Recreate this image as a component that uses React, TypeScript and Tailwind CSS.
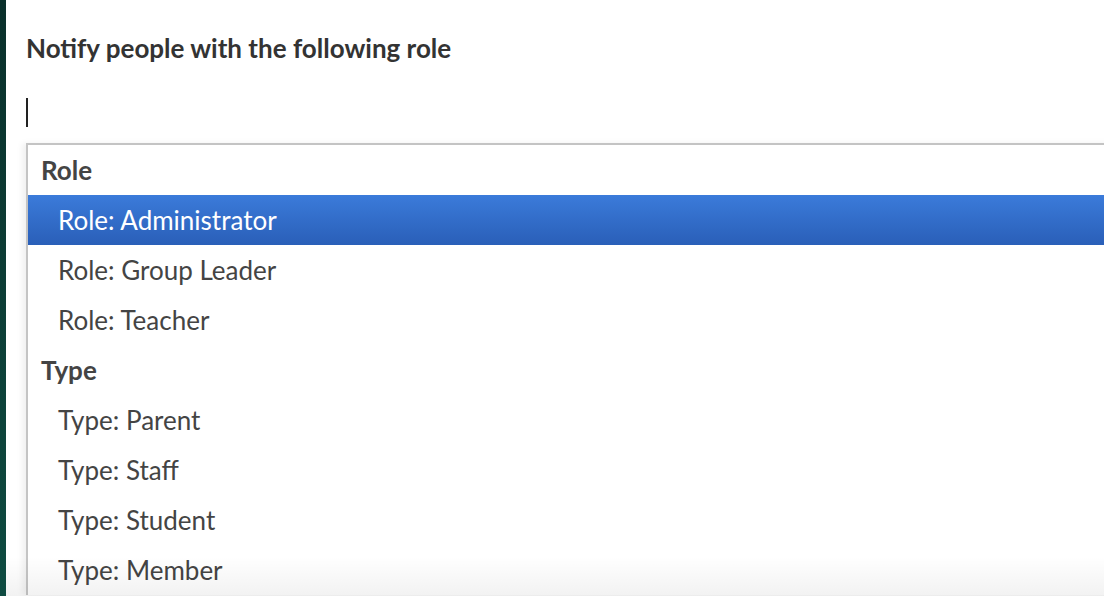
import React from 'react';

type Group = { label: string; options: string[] };

const groups: Group[] = [
  { label: 'Role', options: ['Role: Administrator', 'Role: Group Leader', 'Role: Teacher'] },
  { label: 'Type', options: ['Type: Parent', 'Type: Staff', 'Type: Student', 'Type: Member'] },
];

const App: React.FC = () => {
  const selected = 'Role: Administrator';

  return (
    <div
      className="relative flex h-[596px] w-[1104px] overflow-hidden bg-white"
      style={{ fontFamily: 'Lato, "Open Sans", sans-serif' }}
    >
      {/* dark side rail */}
      <div className="w-[6px] shrink-0 bg-gradient-to-b from-[#0a302b] to-[#0e4b41]" />

      <div className="flex min-w-0 flex-1 flex-col pl-[20px]">
        <h2 className="mt-[33px] text-[26px] font-bold leading-[30px] text-[#333]">
          Notify people with the following role
        </h2>

        {/* text caret */}
        <div className="mt-[35px] h-[29px] w-[2px] bg-[#222]" />

        <div className="mt-[16px] w-[1100px] shrink-0 border-l-2 border-t-2 border-[#c4c4c4] bg-white shadow-[-4px_0_6px_rgba(0,0,0,0.06)]">
          {groups.map((group) => (
            <div key={group.label}>
              <div className="flex h-[50px] items-center pl-[13px] text-[26px] font-bold text-[#444]">
                {group.label}
              </div>
              {group.options.map((option) =>
                option === selected ? (
                  <div
                    key={option}
                    className="flex h-[50px] items-center bg-gradient-to-b from-[#3b7bda] to-[#2a5fb8] pl-[30px] text-[26px] text-white"
                  >
                    {option}
                  </div>
                ) : (
                  <div key={option} className="flex h-[50px] items-center pl-[30px] text-[26px] text-[#444]">
                    {option}
                  </div>
                ),
              )}
            </div>
          ))}
        </div>
      </div>

      {/* bottom fade */}
      <div className="pointer-events-none absolute bottom-0 left-[6px] right-0 h-[40px] bg-gradient-to-b from-transparent to-[rgba(0,0,0,0.05)]" />
    </div>
  );
};

export default App;
